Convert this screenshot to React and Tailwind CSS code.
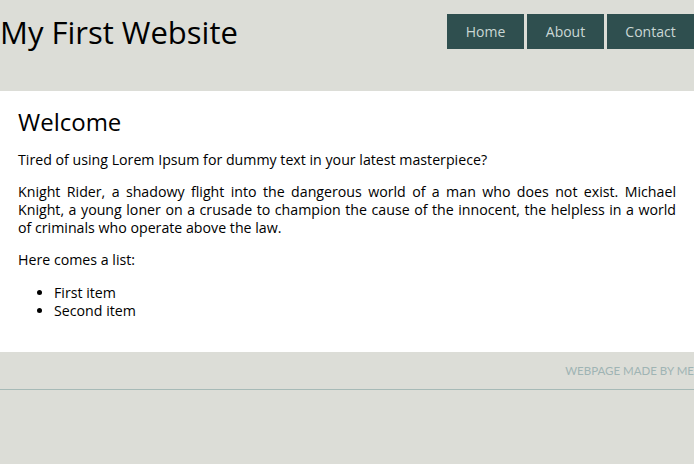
export default function App() {
  return (
    <div className="min-h-[464px] w-[694px] overflow-hidden bg-[#dcddd7] text-black">
      <header className="flex h-[91px] items-start justify-between">
        <h1 className="mt-[12px] whitespace-nowrap font-['Open_Sans',sans-serif] text-[31px] leading-[40px] font-normal">My First Website</h1>
        <nav className="mt-[14px] flex gap-[3px] font-['Open_Sans',sans-serif] text-[14px] text-[#cad7d5]">
          <a className="flex h-[35px] w-[77px] items-center justify-center bg-[#2f4f4f]">Home</a>
          <a className="flex h-[35px] w-[77px] items-center justify-center bg-[#2f4f4f]">About</a>
          <a className="flex h-[35px] w-[87px] items-center justify-center bg-[#2f4f4f]">Contact</a>
        </nav>
      </header>
      <main className="bg-white px-[18px] pt-[16px] pb-[32px] font-['Open_Sans',sans-serif] text-[14.2px] leading-[18px]">
        <h2 className="font-['Open_Sans',sans-serif] text-[24px] leading-[30px]">Welcome</h2>
        <p className="mt-[14px]">Tired of using Lorem Ipsum for dummy text in your latest masterpiece?</p>
        <p className="mt-[14px] text-justify">Knight Rider, a shadowy flight into the dangerous world of a man who does not exist. Michael Knight, a young loner on a crusade to champion the cause of the innocent, the helpless in a world of criminals who operate above the law.</p>
        <p className="mt-[14px]">Here comes a list:</p>
        <ul className="mt-[15px] list-disc pl-[36px]">
          <li>First item</li>
          <li>Second item</li>
        </ul>
      </main>
      <footer className="flex h-[38px] items-center justify-end border-b border-[#a7bab7] font-['Lato',sans-serif] text-[11.5px] text-[#9fb4b4]">
        <span className="whitespace-nowrap">WEBPAGE MADE BY ME</span>
      </footer>
    </div>
  );
}
